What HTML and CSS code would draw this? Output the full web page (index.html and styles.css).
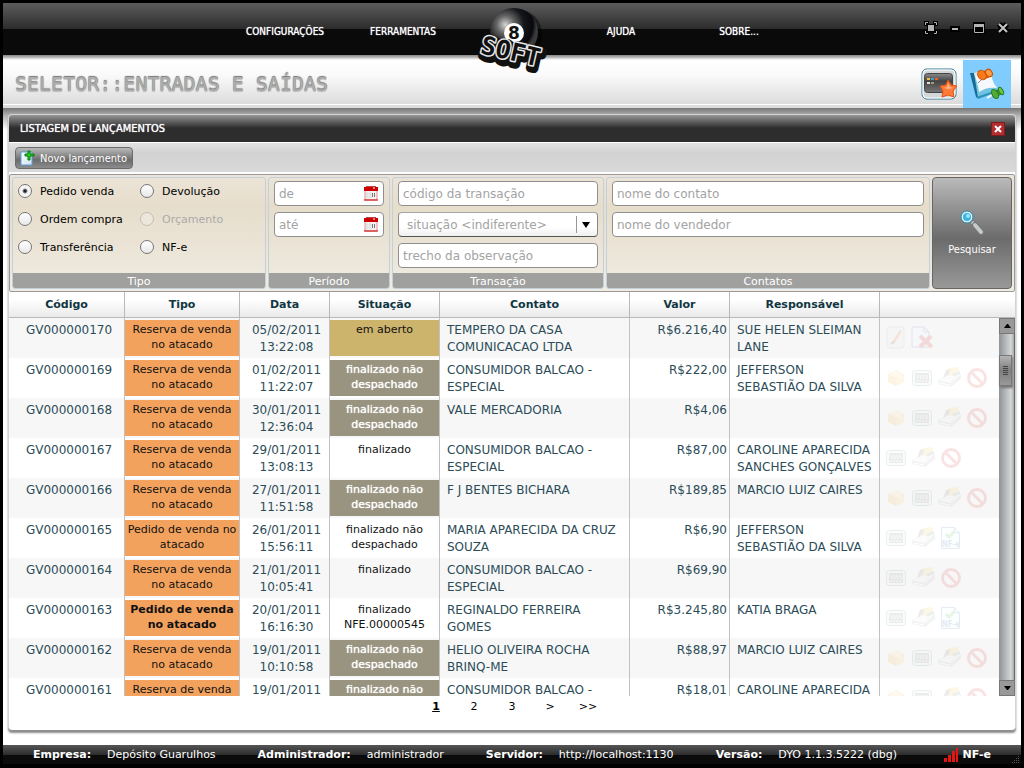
FILE: index.html
```html
<!DOCTYPE html>
<html lang="pt-BR">
<head>
<meta charset="utf-8">
<title>8Soft - Entradas e Saídas</title>
<link rel="stylesheet" href="styles.css">
</head>
<body>
<svg class="sprite" aria-hidden="true">
  <defs>
    <linearGradient id="paper" x1="0" y1="0" x2="1" y2="1"><stop offset="0" stop-color="#fff"/><stop offset="1" stop-color="#cfe0f2"/></linearGradient>
    <radialGradient id="ball" cx=".32" cy=".35" r=".65"><stop offset="0" stop-color="#d5d5d5"/><stop offset=".28" stop-color="#666"/><stop offset=".6" stop-color="#15161a"/><stop offset=".88" stop-color="#08090c"/><stop offset="1" stop-color="#3a3a3a"/></radialGradient>
    <linearGradient id="screen" x1="0" y1="0" x2="0" y2="1"><stop offset="0" stop-color="#8a8a8a"/><stop offset=".4" stop-color="#444"/><stop offset="1" stop-color="#777"/></linearGradient>
  </defs>
  <symbol id="i-edit" viewBox="0 0 22 24"><rect x="2" y="1" width="17" height="21" rx="3" fill="#e8eef0" stroke="#9ab"/><path d="M7 16l8-12 2 1-7 12z" fill="#e8641c"/><path d="M5 19l2-4 3 2z" fill="#446"/></symbol>
  <symbol id="i-del" viewBox="0 0 22 24"><path d="M1 1h12l5 5v15H1z" fill="#f4f7ff" stroke="#4668b0"/><path d="M13 1v5h5" fill="none" stroke="#4668b0"/><path d="M9 10l12 11M20 10L9 21" stroke="#d22" stroke-width="4"/></symbol>
  <symbol id="i-box" viewBox="0 0 22 24"><path d="M3 8l8-4 8 4v8l-8 4-8-4z" fill="#f5a52a"/><path d="M3 8l8-4 8 4-8 4z" fill="#ffd070"/><path d="M11 12v8l8-4V8z" fill="#ffbd50"/><path d="M8 6l7 4v3" fill="none" stroke="#fff"/></symbol>
  <symbol id="i-term" viewBox="0 0 22 24"><rect x="1.500" y="4.500" width="19" height="15" rx="3" fill="#e6eaec" stroke="#4a8c98"/><rect x="4" y="7" width="14" height="10" rx="1" fill="#777"/><path d="M5 10h2m1 0h2m1 0h2m1 0h3M6 12h2m1 0h2m1 0h2m1 0h2M5 15h2m1 0h2m1 0h2m1 0h2" stroke="#fff"/></symbol>
  <symbol id="i-reg" viewBox="0 0 26 24"><path d="M1 14l9-5 14-1v5l-10 8-13-3z" fill="#aab0ba"/><path d="M1 14l9-5 14-1-10 9z" fill="#dde0e5"/><path d="M12 2l9-1 1 3-3 5-9 1z" fill="#f6cf3d"/><path d="M9 4l4-1-1 6-6 3z" fill="#777"/><path d="M15 8l8-3v3l-7 3z" fill="#888"/><path d="M4 14l9 2m-7-4l9 2m-6-4l8 1M2 17l11 2" stroke="#fff"/></symbol>
  <symbol id="i-ban" viewBox="0 0 22 24"><circle cx="10" cy="12" r="8.500" fill="#fff" fill-opacity=".4" stroke="#d33" stroke-width="3"/><path d="M4 6l12 12" stroke="#d33" stroke-width="3"/></symbol>
  <symbol id="i-cal" viewBox="0 0 14 15"><path d="M1 2h12v12H1z" fill="#f1f1f1" stroke="#e09090"/><path d="M0 1h14v4H0z" fill="#c00"/><path d="M2 0h10v1H2z" fill="#b44"/><path d="M9 2h2" stroke="#fff"/><path d="M2 8h6M2 11h6M3 6v6M6 6v6" stroke="#ddd"/><path d="M8 7h1v4H8zm2 0h1v4h-1z" fill="#777"/><path d="M0 14h14" stroke="#c00"/></symbol>
</svg>

<header class="topbar">
  <nav class="menu" aria-label="Principal">
    <a href="#config">CONFIGURAÇÕES</a>
    <a href="#tools">FERRAMENTAS</a>
    <span class="logo-slot">
      <svg class="logo" viewBox="0 0 76 76" role="img" aria-label="8 Soft">
        <circle cx="43" cy="31" r="25" fill="#000" opacity=".45"/>
        <circle cx="40" cy="29" r="24" fill="url(#ball)"/>
        <circle cx="40" cy="30" r="10" fill="#fff"/>
        <text class="logo-eight" x="40" y="36" text-anchor="middle">8</text>
        <g transform="rotate(13 37 47)">
          <text class="logo-back" x="39" y="60" text-anchor="middle">SOFT</text>
          <text class="logo-rim" x="37" y="57" text-anchor="middle">SOFT</text>
          <text class="logo-core" x="37" y="57" text-anchor="middle">SOFT</text>
        </g>
      </svg>
    </span>
    <a href="#help">AJUDA</a>
    <a href="#about">SOBRE...</a>
  </nav>
  <div class="window-buttons">
    <button type="button" aria-label="Tela cheia"><svg viewBox="0 0 16 16"><path d="M1 1h5v3H4v2H1zM10 1h5v5h-3V4h-2zM15 10v5h-5v-3h2v-2zM6 15H1v-5h3v2h2zM4 4h8v8H4z" fill="#000"/><path d="M2.500 5V2.500H5M11 2.500h2.500V5M13.500 11v2.500H11M5 13.500H2.500V11" fill="none" stroke="#b5b5b5"/><path d="M5 5h6v6H5z" fill="#b5b5b5"/></svg></button>
    <button type="button" aria-label="Minimizar"><svg viewBox="0 0 16 16"><path d="M3 6h10v6H3z" fill="#000"/><path d="M5 8h6v2H5z" fill="#b5b5b5"/></svg></button>
    <button type="button" aria-label="Maximizar"><svg viewBox="0 0 16 16"><path d="M2 2h12v12H2z" fill="#000"/><path d="M3.500 4.500h9v8h-9z" fill="none" stroke="#b5b5b5"/><path d="M3 4h10v3H3z" fill="#b5b5b5"/></svg></button>
    <button type="button" aria-label="Fechar"><svg viewBox="0 0 16 16"><path d="M4 4l8 8M12 4l-8 8" stroke="#000" stroke-width="6"/><path d="M4 4l8 8M12 4l-8 8" stroke="#c4c4c4" stroke-width="2"/></svg></button>
  </div>
</header>

<div class="titlebar">
  <h1>SELETOR::ENTRADAS E SAÍDAS</h1>
  <div class="modes">
    <button type="button" class="mode" aria-label="Favoritos">
      <svg viewBox="0 0 36 32"><rect x="1" y="1" width="34" height="30" rx="5" fill="#d3d7d9" stroke="#2f7e96"/><rect x="2" y="2" width="32" height="28" rx="4" fill="none" stroke="#fff"/><rect x="3.500" y="5.500" width="28" height="19" rx="3" fill="url(#screen)" stroke="#444"/><path d="M6 10h3v2H6z" fill="#eec531"/><path d="M10 10h3v2h-3z" fill="#38a1d0"/><path d="M14 10h3v2h-3z" fill="#ef6224"/><path d="M6 14h3v2H6z" fill="#ddd"/><path d="M10 14h3v2h-3z" fill="#999b74"/><path d="M27 12l3 5 6 1-4 5 1 6-6-2-6 2 1-6-3-5 6-1z" fill="#ff7b3a" stroke="#e65112"/><path d="M27 15l2 4 3 1-5 1-4-1 3-1z" fill="#ffb58a"/></svg>
    </button>
    <button type="button" class="mode mode-on" aria-label="Lançamentos">
      <svg viewBox="0 0 36 32"><path d="M1 5l19-3 8 20-20 8z" fill="#71c4e3"/><path d="M1 5l6 24 2 1L5 5z" fill="#176a91"/><path d="M7 29l21-7v2L9 31z" fill="#2f93bd"/><path d="M5 5l17-3c0 7 2 13 6 18-7-1-12 0-18 4C9 17 7 11 5 5z" fill="#f6f9fc"/><path d="M5 5l17-3v2L6 8z" fill="#d6e5ee"/><path d="M13 11l-4 4" stroke="#888"/><path d="M13 4l7-2v7l-5 2z" fill="#f0700c" stroke="#c85000"/><ellipse cx="13" cy="7" rx="4" ry="5" transform="rotate(-35 13 7)" fill="#fa7a1b" stroke="#c85000"/><ellipse cx="20" cy="5" rx="3" ry="4" transform="rotate(-35 20 5)" fill="#ff9a3e" stroke="#c85000"/><path d="M18 30l8-5" stroke="#fff" stroke-width="2"/><path d="M26 23l6-2v5l-5 3z" fill="#46992c" stroke="#237b1b"/><ellipse cx="26" cy="26" rx="3" ry="5" transform="rotate(-30 26 26)" fill="#53a934" stroke="#237b1b"/><ellipse cx="32" cy="23" rx="2" ry="4" transform="rotate(-30 32 23)" fill="#6fc444" stroke="#237b1b"/></svg>
    </button>
  </div>
</div>

<main class="workspace">
  <section class="panel">
    <div class="panel-head">
      <h2>LISTAGEM DE LANÇAMENTOS</h2>
      <button type="button" class="panel-close" aria-label="Fechar listagem"><svg viewBox="0 0 12 12"><path d="M3 3l6 6M9 3L3 9" stroke="#fff" stroke-width="2"/></svg></button>
    </div>
    <div class="toolbar">
      <button type="button" class="btn-new">
        <svg viewBox="0 0 15 16"><path d="M1 2h11v13H1z" fill="url(#paper)" stroke="#5c9ddb"/><path d="M8 1h2v3h4v2h-4v4H8V6H5V4h3z" fill="#28d028" stroke="#087808"/></svg>
        Novo lançamento
      </button>
    </div>

    <form class="filters">
      <div class="group group-type" role="radiogroup" aria-labelledby="g1">
        <div class="radios">
          <label><input type="radio" name="tipo" checked>Pedido venda</label>
          <label><input type="radio" name="tipo">Devolução</label>
          <label><input type="radio" name="tipo">Ordem compra</label>
          <label class="off"><input type="radio" name="tipo" disabled>Orçamento</label>
          <label><input type="radio" name="tipo">Transferência</label>
          <label><input type="radio" name="tipo">NF-e</label>
        </div>
        <div class="group-name" id="g1">Tipo</div>
      </div>
      <div class="group group-period" role="group" aria-labelledby="g2">
        <div class="fields">
          <div class="date"><input type="text" placeholder="de" aria-label="de"><button type="button" aria-label="Escolher data inicial"><svg><use href="#i-cal"/></svg></button></div>
          <div class="date"><input type="text" placeholder="até" aria-label="até"><button type="button" aria-label="Escolher data final"><svg><use href="#i-cal"/></svg></button></div>
        </div>
        <div class="group-name" id="g2">Período</div>
      </div>
      <div class="group group-trans" role="group" aria-labelledby="g3">
        <div class="fields">
          <input type="text" placeholder="código da transação" aria-label="código da transação">
          <div class="combo"><select aria-label="situação"><option>situação &lt;indiferente&gt;</option></select></div>
          <input type="text" placeholder="trecho da observação" aria-label="trecho da observação">
        </div>
        <div class="group-name" id="g3">Transação</div>
      </div>
      <div class="group group-contact" role="group" aria-labelledby="g4">
        <div class="fields">
          <input type="text" placeholder="nome do contato" aria-label="nome do contato">
          <input type="text" placeholder="nome do vendedor" aria-label="nome do vendedor">
        </div>
        <div class="group-name" id="g4">Contatos</div>
      </div>
      <button type="submit" class="btn-search">
        <svg viewBox="0 0 24 26"><path d="M12 12l3 3" stroke="#b8d4e0" stroke-width="3"/><path d="M15 15l6 7" stroke="#777" stroke-width="6" stroke-linecap="round"/><path d="M15 15l6 7" stroke="#c6c9cb" stroke-width="4" stroke-linecap="round"/><circle cx="7" cy="7" r="5" fill="#3bb3dc" stroke="#d9f1fa" stroke-width="2"/><circle cx="7" cy="7" r="6" fill="none" stroke="#3187a5"/><circle cx="8" cy="6" r="2" fill="#9be4fa"/></svg>
        Pesquisar
      </button>
    </form>

    <div class="list">
      <div class="list-view">
        <table>
          <colgroup><col class="c-code"><col class="c-type"><col class="c-date"><col class="c-state"><col><col class="c-value"><col class="c-resp"><col class="c-act"></colgroup>
          <thead><tr><th>Código</th><th>Tipo</th><th>Data</th><th>Situação</th><th>Contato</th><th>Valor</th><th>Responsável</th><th aria-label="Ações"></th></tr></thead>
          <tbody>
            <tr><td>GV000000170</td><td><div class="tag sale">Reserva de venda no atacado</div></td><td>05/02/2011 13:22:08</td><td><div class="tag open">em aberto</div></td><td>TEMPERO DA CASA COMUNICACAO LTDA</td><td>R$6.216,40</td><td>SUE HELEN SLEIMAN LANE</td><td><div class="acts"><svg><use href="#i-edit"/></svg><svg><use href="#i-del"/></svg></div></td></tr>
            <tr><td>GV000000169</td><td><div class="tag sale">Reserva de venda no atacado</div></td><td>01/02/2011 11:22:07</td><td><div class="tag pending">finalizado não despachado</div></td><td>CONSUMIDOR BALCAO - ESPECIAL</td><td>R$222,00</td><td>JEFFERSON SEBASTIÃO DA SILVA</td><td><div class="acts"><svg><use href="#i-box"/></svg><svg><use href="#i-term"/></svg><svg class="wide"><use href="#i-reg"/></svg><svg><use href="#i-ban"/></svg></div></td></tr>
            <tr><td>GV000000168</td><td><div class="tag sale">Reserva de venda no atacado</div></td><td>30/01/2011 12:36:04</td><td><div class="tag pending">finalizado não despachado</div></td><td>VALE MERCADORIA</td><td>R$4,06</td><td></td><td><div class="acts"><svg><use href="#i-box"/></svg><svg><use href="#i-term"/></svg><svg class="wide"><use href="#i-reg"/></svg><svg><use href="#i-ban"/></svg></div></td></tr>
            <tr><td>GV000000167</td><td><div class="tag sale">Reserva de venda no atacado</div></td><td>29/01/2011 13:08:13</td><td><div class="tag">finalizado</div></td><td>CONSUMIDOR BALCAO - ESPECIAL</td><td>R$87,00</td><td>CAROLINE APARECIDA SANCHES GONÇALVES</td><td><div class="acts"><svg><use href="#i-term"/></svg><svg class="wide"><use href="#i-reg"/></svg><svg><use href="#i-ban"/></svg></div></td></tr>
            <tr><td>GV000000166</td><td><div class="tag sale">Reserva de venda no atacado</div></td><td>27/01/2011 11:51:58</td><td><div class="tag pending">finalizado não despachado</div></td><td>F J BENTES BICHARA</td><td>R$189,85</td><td>MARCIO LUIZ CAIRES</td><td><div class="acts"><svg><use href="#i-box"/></svg><svg><use href="#i-term"/></svg><svg class="wide"><use href="#i-reg"/></svg><svg><use href="#i-ban"/></svg></div></td></tr>
            <tr><td>GV000000165</td><td><div class="tag sale">Pedido de venda no atacado</div></td><td>26/01/2011 15:56:11</td><td><div class="tag">finalizado não despachado</div></td><td>MARIA APARECIDA DA CRUZ SOUZA</td><td>R$6,90</td><td>JEFFERSON SEBASTIÃO DA SILVA</td><td><div class="acts"><svg><use href="#i-term"/></svg><svg class="wide"><use href="#i-reg"/></svg><svg viewBox="0 0 22 24"><path d="M.5 1.500h13l5 5v16H.5z" fill="#f7fbff" stroke="#3477b5"/><path d="M13.500 1.500v5h5" fill="none" stroke="#3477b5"/><path d="M5 8l3 3 6-6" fill="none" stroke="#49ba35" stroke-width="3"/><text class="nfe-text" x="10" y="21" text-anchor="middle">NF-e</text></svg></div></td></tr>
            <tr><td>GV000000164</td><td><div class="tag sale">Reserva de venda no atacado</div></td><td>21/01/2011 10:05:41</td><td><div class="tag">finalizado</div></td><td>CONSUMIDOR BALCAO - ESPECIAL</td><td>R$69,90</td><td></td><td><div class="acts"><svg><use href="#i-term"/></svg><svg class="wide"><use href="#i-reg"/></svg><svg><use href="#i-ban"/></svg></div></td></tr>
            <tr><td>GV000000163</td><td><div class="tag sale strong">Pedido de venda no atacado</div></td><td>20/01/2011 16:16:30</td><td><div class="tag">finalizado NFE.00000545</div></td><td>REGINALDO FERREIRA GOMES</td><td>R$3.245,80</td><td>KATIA BRAGA</td><td><div class="acts"><svg><use href="#i-term"/></svg><svg class="wide"><use href="#i-reg"/></svg><svg viewBox="0 0 22 24"><path d="M.5 1.500h13l5 5v16H.5z" fill="#f7fbff" stroke="#3477b5"/><path d="M13.500 1.500v5h5" fill="none" stroke="#3477b5"/><path d="M5 8l3 3 6-6" fill="none" stroke="#49ba35" stroke-width="3"/><text class="nfe-text" x="10" y="21" text-anchor="middle">NF-e</text></svg></div></td></tr>
            <tr><td>GV000000162</td><td><div class="tag sale">Reserva de venda no atacado</div></td><td>19/01/2011 10:10:58</td><td><div class="tag pending">finalizado não despachado</div></td><td>HELIO OLIVEIRA ROCHA BRINQ-ME</td><td>R$88,97</td><td>MARCIO LUIZ CAIRES</td><td><div class="acts"><svg><use href="#i-box"/></svg><svg><use href="#i-term"/></svg><svg class="wide"><use href="#i-reg"/></svg><svg><use href="#i-ban"/></svg></div></td></tr>
            <tr><td>GV000000161</td><td><div class="tag sale">Reserva de venda</div></td><td>19/01/2011</td><td><div class="tag pending">finalizado não</div></td><td>CONSUMIDOR BALCAO -</td><td>R$18,01</td><td>CAROLINE APARECIDA</td><td><div class="acts"><svg><use href="#i-box"/></svg><svg><use href="#i-term"/></svg><svg class="wide"><use href="#i-reg"/></svg><svg><use href="#i-ban"/></svg></div></td></tr>
          </tbody>
        </table>
      </div>
      <div class="scroll">
        <div class="scroll-head"></div>
        <button type="button" class="scroll-btn" aria-label="Rolar para cima"><svg viewBox="0 0 7 4"><path d="M0 4l3-4h1l3 4z"/></svg></button>
        <div class="scroll-track"><div class="scroll-thumb"></div></div>
        <button type="button" class="scroll-btn" aria-label="Rolar para baixo"><svg viewBox="0 0 7 4"><path d="M0 0l3 4h1l3-4z"/></svg></button>
      </div>
    </div>
    <nav class="pager" aria-label="Páginas">
      <a href="#p1" class="current">1</a><a href="#p2">2</a><a href="#p3">3</a><a href="#next">&gt;</a><a href="#last">&gt;&gt;</a>
    </nav>
  </section>
</main>

<footer class="status">
  <div><b>Empresa:</b><span>Depósito Guarulhos</span></div>
  <div><b>Administrador:</b><span>administrador</span></div>
  <div><b>Servidor:</b><span>http://localhost:1130</span></div>
  <div><b>Versão:</b><span>DYO 1.1.3.5222 (dbg)</span></div>
  <div class="signal"><svg viewBox="0 0 15 15"><path d="M0 11h3v4H0zM4 8h3v7H4zM8 4h3v11H8zM12 1h2v14h-2z" fill="#e81313"/></svg><b>NF-e</b></div>
  <svg class="grip" viewBox="0 0 8 8"><path d="M6 0h1v1H6zM4 2h1v1H4zM6 2h1v1H6zM2 4h1v1H2zM4 4h1v1H4zM6 4h1v1H6zM0 6h1v1H0zM2 6h1v1H2zM4 6h1v1H4zM6 6h1v1H6z" fill="#555"/></svg>
</footer>
</body>
</html>
```
FILE: styles.css
```css
* { box-sizing: border-box; }
body {
  margin: 0;
  height: 100vh;
  display: flex;
  flex-direction: column;
  overflow: hidden;
  border: 3px solid #000;
  border-bottom-width: 4px;
  background: #fff;
  font: 11px/15px "DejaVu Sans", sans-serif;
  color: #000;
}
button, input, select { font: inherit; color: inherit; margin: 0; }
button { padding: 0; border: 0; background: none; }
a { color: inherit; text-decoration: none; }
svg { display: block; }
.sprite { position: absolute; width: 0; height: 0; }

/* top bar */
.topbar {
  position: relative;
  flex: none;
  height: 52px;
  display: flex;
  align-items: center;
  justify-content: center;
  background: linear-gradient(#5c5c5c, #2c2c2c 26px, #0a0a0a 26px);
}
.menu {
  display: grid;
  grid-template-columns: 118px 118px 100px 118px 118px;
  height: 52px;
  align-items: center;
  text-align: center;
  color: #fff;
  font: 10px/14px "DejaVu Sans Condensed", "DejaVu Sans", sans-serif;
  text-shadow: 0 0 1px #fff;
}
.menu a { padding-top: 5px; }
.logo-slot { position: relative; height: 52px; }
.logo { position: absolute; left: 12px; top: 0; width: 76px; height: 76px; z-index: 2; text-shadow: none; overflow: visible; }
.logo-eight { font: bold 17px "DejaVu Sans", sans-serif; fill: #111; }
.logo-back, .logo-rim, .logo-core { font: bold 25px "DejaVu Sans Mono", monospace; stroke-linejoin: round; }
.logo-back { fill: #111; stroke: #111; stroke-width: 9px; }
.logo-rim { fill: #ddd; stroke: #e8e8e8; stroke-width: 3px; }
.logo-core { fill: #111; stroke: none; }
.nfe-text { font: bold 8px "DejaVu Sans Condensed", sans-serif; fill: #2366a5; }
.window-buttons {
  position: absolute;
  right: 10px;
  top: 17px;
  display: flex;
  gap: 8px;
}
.window-buttons svg { width: 16px; height: 16px; }

/* title strip */
.titlebar {
  flex: none;
  height: 53px;
  display: flex;
  justify-content: space-between;
  align-items: flex-end;
  padding: 0 10px 0 12px;
  background: linear-gradient(#858585, #b0b0b0 2px, #fff 5px, #fafafa 20px, #dcdcdc 49px, #fff 49px, #fff 50px, #dcdcdc 50px);
}
h1 {
  margin: 0;
  font: 20px/48px "DejaVu Sans Mono", monospace;
  color: #adadad;
  text-shadow: 0 -1px 1px #777, 0 1px 1px #bbb, 0 0 1px #999;
}
.modes { display: flex; }
.mode { width: 48px; height: 48px; display: flex; align-items: center; justify-content: center; }
.mode svg { width: 36px; height: 32px; }
.mode-on { background: #80ccff; }

/* workspace */
.workspace {
  flex: 1;
  min-height: 0;
  display: flex;
  padding: 6px 5px 15px;
  background: linear-gradient(#777, #b5b5b5 8px, #fff 22px);
}
.panel {
  flex: 1;
  min-width: 0;
  display: flex;
  flex-direction: column;
  border: 1px solid #d4d4d4;
  border-bottom: 0;
  border-radius: 4px;
  background: #fff;
  box-shadow: 0 3px 2px #8c8c8c;
  overflow: hidden;
}
.panel-head {
  flex: none;
  height: 27px;
  display: flex;
  align-items: center;
  justify-content: space-between;
  padding: 0 10px 0 11px;
  color: #fff;
  background: linear-gradient(#969696, #2d2d2d 13px);
}
h2 { margin: 0; font: 11px/15px "DejaVu Sans Condensed", "DejaVu Sans", sans-serif; text-shadow: 0 0 1px #fff; }
.panel-close { width: 14px; height: 14px; background: #b22c30; border: 1px solid #7c1c1e; }
.panel-close svg { width: 12px; height: 12px; }
.toolbar {
  flex: none;
  padding: 4px 6px 0;
  height: 32px;
  border: 1px solid #fff;
  border-width: 1px 0 2px;
  background: linear-gradient(#e2e2e2, #d2d2d2 10px, #d9d9d9);
}
.btn-new {
  display: flex;
  align-items: center;
  gap: 5px;
  height: 22px;
  padding: 0 5px 0 4px;
  border: 1px solid #6a6a6a;
  border-radius: 4px;
  background: linear-gradient(#bbb, #6c6c6c 60%, #8c8c8c);
  color: #fff;
  font: 11px/15px "DejaVu Sans Condensed", "DejaVu Sans", sans-serif;
}
.btn-new svg { width: 15px; height: 16px; }

/* filters */
.filters {
  flex: none;
  display: flex;
  gap: 2px;
  padding: 2px;
  border: 1px solid #999;
  border-radius: 2px;
  background: linear-gradient(#ece4d8, #e6ddcb 32px, #f0ece3);
}
.group {
  min-height: 112px;
  display: flex;
  flex-direction: column;
  justify-content: space-between;
  border: 1px solid #c2d0dc;
  border-radius: 3px;
  overflow: hidden;
}
.group-type { flex: 0 0 254px; }
.group-period { flex: 0 0 122px; }
.group-trans { flex: 0 0 212px; }
.group-contact { flex: 1; }
.group-name { height: 15px; line-height: 18px; background: #a0a09e; color: #fff; text-align: center; }
.radios { display: grid; grid-template-columns: 122px 1fr; grid-auto-rows: 28px; padding-left: 5px; }
.radios label { display: flex; align-items: center; gap: 8px; padding-bottom: 2px; line-height: 15px; }
.radios .off { color: #aaabab; }
.radios input {
  appearance: none;
  width: 14px;
  height: 14px;
  border: 1px solid #777;
  border-radius: 50%;
  background: linear-gradient(#fff, #e8e8e8);
}
.radios input:checked { background: radial-gradient(circle, #222 0 1px, #f5f5f5 3px); }
.radios input:disabled { border-color: #c4beb2; background: #ece6db; }
.fields { display: flex; flex-direction: column; gap: 6px; padding: 3px 5px 0; font-size: 12px; }
.fields input, .fields select {
  width: 100%;
  height: 25px;
  padding: 0 4px;
  border: 1px solid #8f8f8f;
  border-radius: 4px;
  background: #fff;
  color: #a3a3a3;
}
.fields input::placeholder { color: #a3a3a3; opacity: 1; }
.date, .combo { position: relative; height: 25px; }
.date button { position: absolute; right: 6px; top: 5px; }
.date svg { width: 14px; height: 15px; }
.fields select { appearance: none; padding: 1px 8px 0; border-color: #a5a5a5 #888 #555; background: linear-gradient(#fff 60%, #f0f0f0); }
.combo::after {
  content: "";
  position: absolute;
  right: 8px;
  top: 10px;
  border: 4px solid transparent;
  border-top: 6px solid #000;
  border-bottom: 0;
}
.combo::before { content: ""; position: absolute; right: 21px; top: 4px; height: 17px; border-left: 1px solid #999; }
.btn-search {
  flex: 0 0 80px;
  display: flex;
  flex-direction: column;
  align-items: center;
  justify-content: center;
  gap: 6px;
  border: 1px solid #666;
  border-radius: 4px;
  background: linear-gradient(#bababa, #6b6b6b 55%, #999);
  color: #fff;
  font: 11px/15px "DejaVu Sans Condensed", "DejaVu Sans", sans-serif;
}
.btn-search svg { width: 24px; height: 26px; }

/* list */
.list { flex: 1; min-height: 0; display: flex; }
.list-view { flex: 1; min-width: 0; overflow: hidden; }
table { width: 100%; table-layout: fixed; border-collapse: separate; border-spacing: 0; }
.c-code, .c-type { width: 115px; }
.c-date { width: 90px; }
.c-state { width: 110px; }
.c-value { width: 100px; }
.c-resp { width: 150px; }
.c-act { width: 120px; }
th {
  height: 26px;
  padding: 0;
  border-bottom: 1px solid #b7babc;
  border-left: 1px solid #b7babc;
  background: linear-gradient(#fff 30%, #eaeaea);
  color: #0f3642;
  font-weight: bold;
}
th:first-child, td:first-child { border-left: 0; }
td {
  height: 40px;
  padding: 4px 7px 2px;
  border-left: 1px solid #c0c2c4;
  vertical-align: top;
  font-size: 12px;
  line-height: 17px;
  color: #2b4c57;
}
tbody tr:nth-child(odd) { background: #f7f7f7; }
td:first-child { text-align: center; padding-left: 12px; }
td:nth-child(2), td:nth-child(4) { padding: 2px 0; }
td:nth-child(3) { text-align: center; padding-left: 8px; padding-right: 4px; }
td:nth-child(6) { text-align: right; padding-right: 2px; }
td:nth-child(7) { padding-right: 6px; }
td:nth-child(8) { padding: 8px 5px 0; }
.tag { height: 36px; padding: 2px 2px 0; text-align: center; font-size: 11px; line-height: 15px; color: #111; }
.sale { background: #f3a25e; }
.open { background: #cdb46c; }
.pending { background: #99947f; color: #fff; padding-left: 10px; padding-right: 10px; text-shadow: 0 0 1px #fff; }
.strong { font-weight: bold; }
.acts { display: flex; gap: 4px; opacity: .13; }
.acts svg { width: 22px; height: 24px; }
.acts .wide { width: 26px; }

.scroll { flex: 0 0 16px; display: flex; flex-direction: column; }
.scroll-head { flex: none; height: 26px; border-bottom: 1px solid #b7babc; background: linear-gradient(#fff 30%, #eaeaea); }
.scroll-btn { flex: none; height: 16px; display: flex; align-items: center; justify-content: center; border: 1px solid #777; background: #999; }
.scroll-btn svg { width: 7px; height: 4px; }
.scroll-track { flex: 1; padding-top: 21px; border-right: 1px solid #666; background: linear-gradient(90deg, #8d9396, #d5d7d9 80%, #aaa); }
.scroll-thumb {
  width: 13px;
  height: 31px;
  border: 1px solid #777;
  box-shadow: 1px 2px 2px #777;
  background: repeating-linear-gradient(#444 0 1px, transparent 1px 2px) center / 5px 9px no-repeat, linear-gradient(#b5b5b5, #7e7e7e 50%, #999);
}
.pager { flex: none; height: 34px; padding-top: 3px; display: flex; justify-content: center; text-align: center; }
.pager a { width: 38px; }
.current { font-weight: bold; text-decoration: underline; }

/* status bar */
.status {
  position: relative;
  flex: none;
  height: 19px;
  display: flex;
  align-items: center;
  gap: 42px;
  padding: 0 30px;
  white-space: nowrap;
  color: #fff;
  background: linear-gradient(#555, #2c2c2c 10px, #0b0b0b 10px);
}
.status div { display: flex; gap: 16px; }
.status .signal { margin-left: auto; gap: 4px; }
.signal svg { width: 15px; height: 15px; }
.grip { position: absolute; right: 1px; bottom: 0; width: 8px; height: 8px; }
```
